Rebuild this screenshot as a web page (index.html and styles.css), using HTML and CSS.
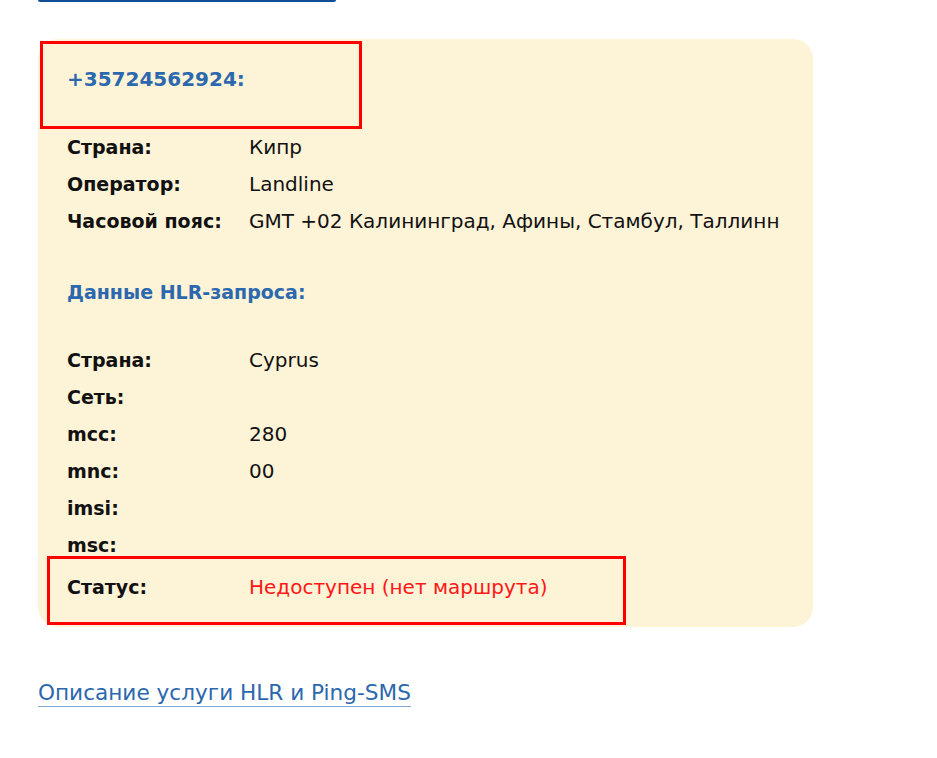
FILE: index.html
```html
<!DOCTYPE html>
<html lang="ru">
<head>
    <meta charset="UTF-8">
    <meta name="viewport" content="width=device-width, initial-scale=1.0">
    <title>HLR-запрос</title>
    <link rel="stylesheet" href="styles.css">
</head>
<body>

    <div class="page">
        <div class="top-bar"></div>

        <!-- Результат проверки номера -->
        <div class="result-card">
            <div class="mark mark-title"></div>
            <div class="mark mark-status"></div>

            <div class="result-title">+35724562924:</div>

            <div class="info-list">
                <div class="info-label">Страна:</div>
                <div class="info-value">Кипр</div>
                <div class="info-label">Оператор:</div>
                <div class="info-value">Landline</div>
                <div class="info-label">Часовой пояс:</div>
                <div class="info-value">GMT +02 Калининград, Афины, Стамбул, Таллинн</div>
            </div>

            <div class="section-title">Данные HLR-запроса:</div>

            <div class="info-list">
                <div class="info-label">Страна:</div>
                <div class="info-value">Cyprus</div>
                <div class="info-label">Сеть:</div>
                <div class="info-value"></div>
                <div class="info-label">mcc:</div>
                <div class="info-value">280</div>
                <div class="info-label">mnc:</div>
                <div class="info-value">00</div>
                <div class="info-label">imsi:</div>
                <div class="info-value"></div>
                <div class="info-label">msc:</div>
                <div class="info-value"></div>
                <div class="info-label status-row">Статус:</div>
                <div class="info-value status-row status-error">Недоступен (нет маршрута)</div>
            </div>
        </div>

        <a href="#" class="service-link">Описание услуги HLR и Ping-SMS</a>
    </div>

</body>
</html>
```

FILE: styles.css
```css
html, body {
    margin: 0;
    padding: 0;
}

body {
    font-family: "DejaVu Sans", sans-serif;
    background-color: #fff;
    color: #111;
}

.page {
    padding-left: 38px;
}

.top-bar {
    width: 298px;
    height: 2px;
    background-color: #0f4f98;
    border-radius: 0 0 3px 3px;
}

.result-card {
    position: relative;
    margin-top: 37px;
    width: 717px;
    padding: 22px 29px 21px;
    background-color: #fdf3d7;
    border-radius: 20px;
}

.result-title,
.section-title {
    font-weight: bold;
    line-height: 37px;
    color: #2c68ad;
}

.result-title {
    font-size: 20px;
    margin-bottom: 31px;
}

.section-title {
    font-size: 19px;
    margin: 34px 0 31px;
}

.info-list {
    display: grid;
    grid-template-columns: 182px 1fr;
    line-height: 37px;
}

.info-label {
    font-size: 19px;
    font-weight: bold;
}

.info-value {
    font-size: 20px;
}

.status-row {
    padding-top: 5px;
}

.status-error {
    color: #ff1616;
}

/* Красные рамки поверх карточки */
.mark {
    position: absolute;
    border: 3px solid #ff0000;
    box-sizing: border-box;
}

.mark-title {
    left: 2px;
    top: 2px;
    width: 322px;
    height: 88px;
}

.mark-status {
    left: 9px;
    top: 517px;
    width: 579px;
    height: 69px;
}

.service-link {
    display: inline-block;
    margin-top: 53px;
    font-size: 21.6px;
    line-height: 26px;
    color: #2c68ad;
    text-decoration: none;
    border-bottom: 1px solid #86a8d4;
}
```
